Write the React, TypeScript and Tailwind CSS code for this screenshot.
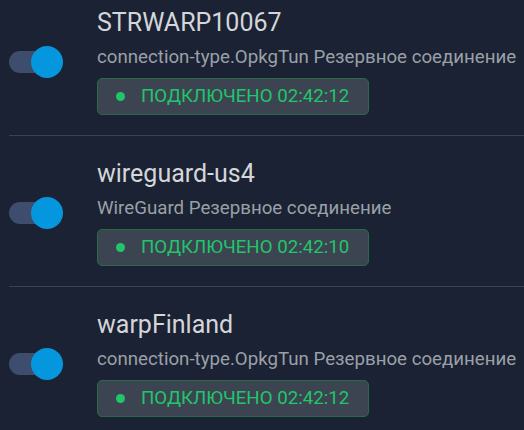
import React from 'react';

type Conn = { name: string; type: string; time: string };

const conns: Conn[] = [
    { name: 'STRWARP10067', type: 'connection-type.OpkgTun Резервное соединение', time: '02:42:12' },
    { name: 'wireguard-us4', type: 'WireGuard Резервное соединение', time: '02:42:10' },
    { name: 'warpFinland', type: 'connection-type.OpkgTun Резервное соединение', time: '02:42:12' },
];

function Toggle() {
    return (
        <div className="relative w-[54px] h-[32px] shrink-0">
            <div className="absolute left-0 top-[5px] w-[46px] h-[22px] rounded-full bg-[#3e4d6e]" />
            <div className="absolute right-0 top-0 size-[32px] rounded-full bg-[#0497de]" />
        </div>
    );
}

export default function App() {
    return (
        <div className="min-h-screen bg-[#1b2233] overflow-hidden font-['Roboto',sans-serif]">
            <div className="-mt-[15px] pl-[9px]">
                {conns.map((c, i) => (
                    <div key={i} className="flex items-center border-b border-[#3a4254] pt-[24px] pb-[20px]">
                        <Toggle />
                        <div className="ml-[34px] flex flex-col items-start">
                            <div className="text-[25px] leading-[28px] text-[#d4d6da]">{c.name}</div>
                            <div className="mt-[8px] text-[18.7px] leading-[24px] text-[#9aa0a8] whitespace-nowrap">{c.type}</div>
                            <div className="mt-[9px] flex items-center gap-[16px] h-[37px] pl-[18px] pr-[19px] rounded-[5px] border border-[#2a6a45] bg-[#3b4450]">
                                <span className="size-[9px] rounded-full bg-[#22c56b]" />
                                <span className="text-[18.7px] leading-[27px] text-[#22c56b]">ПОДКЛЮЧЕНО {c.time}</span>
                            </div>
                        </div>
                    </div>
                ))}
            </div>
        </div>
    );
}
